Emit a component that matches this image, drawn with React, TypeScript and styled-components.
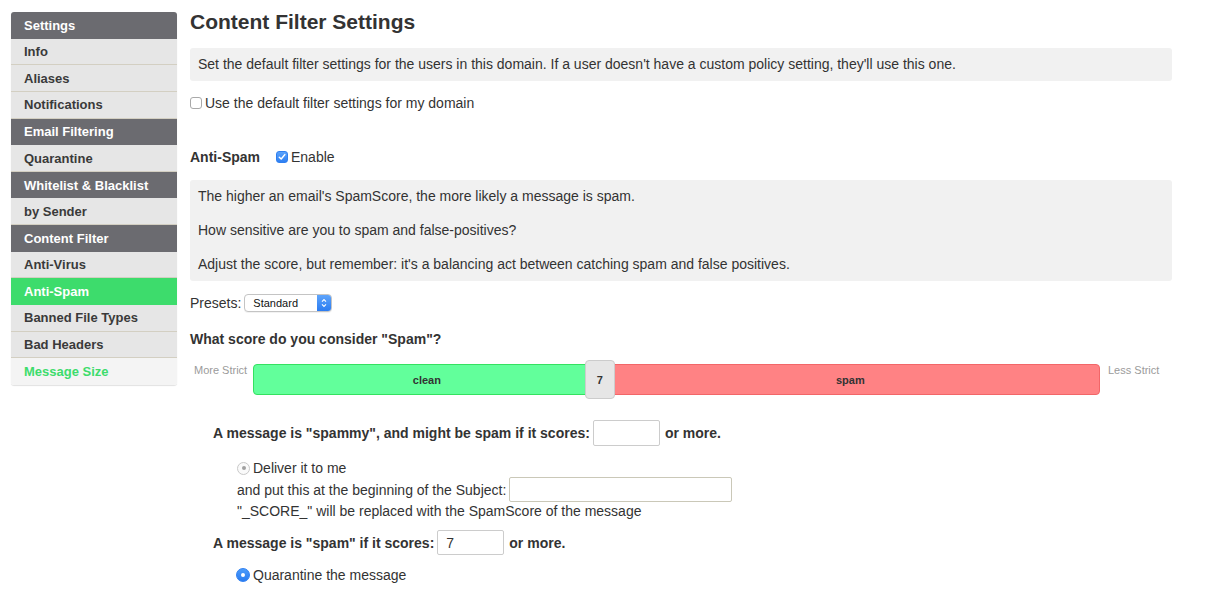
import React from "react";
import styled, { createGlobalStyle } from "styled-components";

const TEXT = "#333333";
const GREEN = "#3ddc6c";

const Global = createGlobalStyle`
  html, body {
    margin: 0;
    padding: 0;
    background: #ffffff;
  }
  body {
    font-family: "Liberation Sans", Arial, Helvetica, sans-serif;
    font-size: 14px;
    color: ${TEXT};
  }
`;

const Page = styled.div`
  display: flex;
  align-items: flex-start;
  gap: 13px;
  padding: 12px 0 0 11px;
`;

/* ---------- sidebar ---------- */

const Side = styled.nav`
  width: 166px;
  flex: none;
  display: flex;
  flex-direction: column;
  border-radius: 3px;
  overflow: hidden;
  box-shadow: 0 1px 1px rgba(0, 0, 0, 0.12);
`;

type ItemKind = "head" | "item" | "active" | "muted";

const SideRow = styled.div<{ $kind: ItemKind }>`
  height: 26.65px;
  box-sizing: border-box;
  display: flex;
  align-items: center;
  padding-left: 13px;
  font-weight: bold;
  font-size: 13px;
  color: ${({ $kind }) =>
    $kind === "head" || $kind === "active"
      ? "#ffffff"
      : $kind === "muted"
        ? GREEN
        : "#3a3a3a"};
  background: ${({ $kind }) =>
    $kind === "head"
      ? "#6b6b70"
      : $kind === "active"
        ? GREEN
        : $kind === "muted"
          ? "#f4f4f4"
          : "#e6e6e6"};
  border-bottom: ${({ $kind }) =>
    $kind === "item" ? "1px solid #d3cfc2" : "none"};
`;

const NAV: { label: string; kind: ItemKind }[] = [
  { label: "Settings", kind: "head" },
  { label: "Info", kind: "item" },
  { label: "Aliases", kind: "item" },
  { label: "Notifications", kind: "item" },
  { label: "Email Filtering", kind: "head" },
  { label: "Quarantine", kind: "item" },
  { label: "Whitelist & Blacklist", kind: "head" },
  { label: "by Sender", kind: "item" },
  { label: "Content Filter", kind: "head" },
  { label: "Anti-Virus", kind: "item" },
  { label: "Anti-Spam", kind: "active" },
  { label: "Banned File Types", kind: "item" },
  { label: "Bad Headers", kind: "item" },
  { label: "Message Size", kind: "muted" },
];

/* ---------- main ---------- */

const Main = styled.main`
  width: 982px;
  flex: none;
`;

const Title = styled.h1`
  margin: 0;
  font-size: 21px;
  line-height: 20px;
  font-weight: bold;
  color: ${TEXT};
`;

const Well = styled.div<{ $mt: number }>`
  margin-top: ${({ $mt }) => $mt}px;
  background: #f1f1f1;
  border-radius: 3px;
  padding: 8px 8px 9px;
  line-height: 16px;
`;

const NoteWell = styled.div`
  margin-top: 14px;
  background: #f1f1f1;
  border-radius: 3px;
  padding: 7px 8px 8px;
  display: flex;
  flex-direction: column;
  gap: 16px;
  line-height: 18px;
`;

const Line = styled.div<{ $mt?: number; $indent?: number; $bold?: boolean }>`
  display: flex;
  align-items: center;
  margin-top: ${({ $mt }) => $mt ?? 0}px;
  padding-left: ${({ $indent }) => $indent ?? 0}px;
  line-height: 18px;
  min-height: 18px;
  font-weight: ${({ $bold }) => ($bold ? "bold" : "normal")};
`;

const Check = styled.span<{ $on?: boolean }>`
  width: 12px;
  height: 12px;
  box-sizing: border-box;
  border-radius: 3px;
  border: 1px solid ${({ $on }) => ($on ? "#2f7ff0" : "#a9a9a9")};
  background: ${({ $on }) =>
    $on ? "linear-gradient(#5aa2fb, #2e7ff2)" : "#ffffff"};
  display: inline-flex;
  align-items: center;
  justify-content: center;
  margin-right: 3px;
  flex: none;
`;

const Radio = styled.span<{ $on?: boolean }>`
  width: ${({ $on }) => ($on ? 14 : 13)}px;
  height: ${({ $on }) => ($on ? 14 : 13)}px;
  box-sizing: border-box;
  border-radius: 50%;
  border: 1px solid ${({ $on }) => ($on ? "#2f80f2" : "#c9c9c9")};
  background: ${({ $on }) =>
    $on ? "linear-gradient(#4b9bfa, #2a7cf0)" : "#fafafa"};
  display: inline-flex;
  align-items: center;
  justify-content: center;
  margin-right: 3px;
  flex: none;

  &::after {
    content: "";
    width: 4px;
    height: 4px;
    border-radius: 50%;
    background: ${({ $on }) => ($on ? "#ffffff" : "#a0a0a0")};
  }
`;

const Label = styled.span<{ $gap?: number }>`
  font-weight: bold;
  margin-right: ${({ $gap }) => $gap ?? 0}px;
`;

const Select = styled.div`
  margin-left: 3px;
  width: 88px;
  height: 18px;
  box-sizing: border-box;
  border: 1px solid #c4c4c4;
  border-radius: 4px;
  background: #ffffff;
  display: flex;
  align-items: stretch;
  overflow: hidden;
  font-size: 11px;
  box-shadow: 0 1px 0 rgba(0, 0, 0, 0.05);
`;

const SelectText = styled.span`
  flex: 1;
  padding-left: 8px;
  line-height: 16px;
  color: #111;
`;

const Stepper = styled.span`
  width: 14px;
  background: linear-gradient(#5ea4fb, #2c7cf1);
  display: flex;
  align-items: center;
  justify-content: center;
`;

const Heading = styled.div`
  margin-top: 18px;
  font-weight: bold;
  line-height: 18px;
`;

/* ---------- slider ---------- */

const SliderRow = styled.div`
  margin-top: 12px;
  display: flex;
  align-items: flex-start;
  height: 39px;
`;

const EdgeLabel = styled.span<{ $w: number; $pl: number }>`
  width: ${({ $w }) => $w}px;
  padding-left: ${({ $pl }) => $pl}px;
  box-sizing: border-box;
  flex: none;
  font-size: 11px;
  color: #9b9b9b;
  line-height: 14px;
  margin-top: 3px;
`;

const Track = styled.div`
  position: relative;
  margin-top: 4px;
  width: 847px;
  height: 31px;
  display: flex;
  flex: none;
`;

const Segment = styled.div<{ $kind: "clean" | "spam" }>`
  box-sizing: border-box;
  height: 31px;
  display: flex;
  align-items: center;
  justify-content: center;
  font-size: 11px;
  font-weight: bold;
  color: #333;
  background: ${({ $kind }) => ($kind === "clean" ? "#62ff9b" : "#ff8284")};
  border: 1px solid ${({ $kind }) => ($kind === "clean" ? "#34e160" : "#f26668")};
  border-radius: ${({ $kind }) => ($kind === "clean" ? "4px 0 0 4px" : "0 4px 4px 0")};
`;

const Handle = styled.div`
  position: absolute;
  top: -4px;
  width: 30px;
  height: 39px;
  box-sizing: border-box;
  background: #e6e6e6;
  border: 1px solid #cccccc;
  border-radius: 4px;
  display: flex;
  align-items: center;
  justify-content: center;
  font-size: 11px;
  font-weight: bold;
  color: #333;
  transform: translateX(-50%);
`;

/* ---------- score rows ---------- */

const Field = styled.span<{ $w: number; $h: number }>`
  width: ${({ $w }) => $w}px;
  height: ${({ $h }) => $h}px;
  box-sizing: border-box;
  border: 1px solid #cccccc;
  border-radius: 2px;
  background: #ffffff;
  margin: 0 5px 0 3px;
  padding-left: 8px;
  display: inline-flex;
  align-items: center;
  font-weight: normal;
  font-size: 14px;
  flex: none;
`;

const ScoreRow = styled.div<{ $mt: number; $indent: number; $h: number }>`
  margin-top: ${({ $mt }) => $mt}px;
  padding-left: ${({ $indent }) => $indent}px;
  height: ${({ $h }) => $h}px;
  display: flex;
  align-items: center;
`;

export default function App() {
  const value = 7;
  const min = 0;
  const max = 18.2;
  const pos = ((value - min) / (max - min)) * 847 + 22;

  return (
    <>
      <Global />
      <Page>
        <Side>
          {NAV.map((n) => (
            <SideRow key={n.label} $kind={n.kind}>
              {n.label}
            </SideRow>
          ))}
        </Side>

        <Main>
          <Title>Content Filter Settings</Title>
          <Well $mt={16}>
            Set the default filter settings for the users in this domain. If a
            user doesn't have a custom policy setting, they'll use this one.
          </Well>

          <Line $mt={13}>
            <Check />
            Use the default filter settings for my domain
          </Line>

          <Line $mt={36}>
            <Label $gap={16}>Anti-Spam</Label>
            <Check $on>
              <svg width="8" height="8" viewBox="0 0 8 8">
                <path
                  d="M1.3 4.2 L3.2 6 L6.8 1.6"
                  fill="none"
                  stroke="#fff"
                  strokeWidth="1.5"
                  strokeLinecap="round"
                  strokeLinejoin="round"
                />
              </svg>
            </Check>
            Enable
          </Line>

          <NoteWell>
            <div>The higher an email's SpamScore, the more likely a message is spam.</div>
            <div>How sensitive are you to spam and false-positives?</div>
            <div>
              Adjust the score, but remember: it's a balancing act between
              catching spam and false positives.
            </div>
          </NoteWell>

          <Line $mt={13}>
            Presets:
            <Select>
              <SelectText>Standard</SelectText>
              <Stepper>
                <svg width="6" height="10" viewBox="0 0 6 10">
                  <path
                    d="M1 3.6 L3 1.6 L5 3.6 M1 6.4 L3 8.4 L5 6.4"
                    fill="none"
                    stroke="#fff"
                    strokeWidth="1.1"
                  />
                </svg>
              </Stepper>
            </Select>
          </Line>

          <Heading>What score do you consider "Spam"?</Heading>

          <SliderRow>
            <EdgeLabel $w={63} $pl={4}>More Strict</EdgeLabel>
            <Track>
              <Segment $kind="clean" style={{ width: pos }}>
                clean
              </Segment>
              <Segment $kind="spam" style={{ width: 847 - pos }}>
                spam
              </Segment>
              <Handle style={{ left: pos - 1 }}>{value}</Handle>
            </Track>
            <EdgeLabel $w={72} $pl={8}>Less Strict</EdgeLabel>
          </SliderRow>

          <ScoreRow $mt={21} $indent={23} $h={26}>
            <Label>A message is "spammy", and might be spam if it scores:</Label>
            <Field $w={67} $h={26} />
            <Label>or more.</Label>
          </ScoreRow>

          <Line $mt={13} $indent={47}>
            <Radio />
            Deliver it to me
          </Line>
          <ScoreRow $mt={0} $indent={47} $h={25}>
            and put this at the beginning of the Subject:
            <Field $w={223} $h={25} style={{ borderColor: "#cac8b8" }} />
          </ScoreRow>
          <Line $indent={47}>"_SCORE_" will be replaced with the SpamScore of the message</Line>

          <ScoreRow $mt={10} $indent={23} $h={25}>
            <Label>A message is "spam" if it scores:</Label>
            <Field $w={67} $h={25}>7</Field>
            <Label>or more.</Label>
          </ScoreRow>

          <Line $mt={11} $indent={46}>
            <Radio $on />
            Quarantine the message
          </Line>
        </Main>
      </Page>
    </>
  );
}
